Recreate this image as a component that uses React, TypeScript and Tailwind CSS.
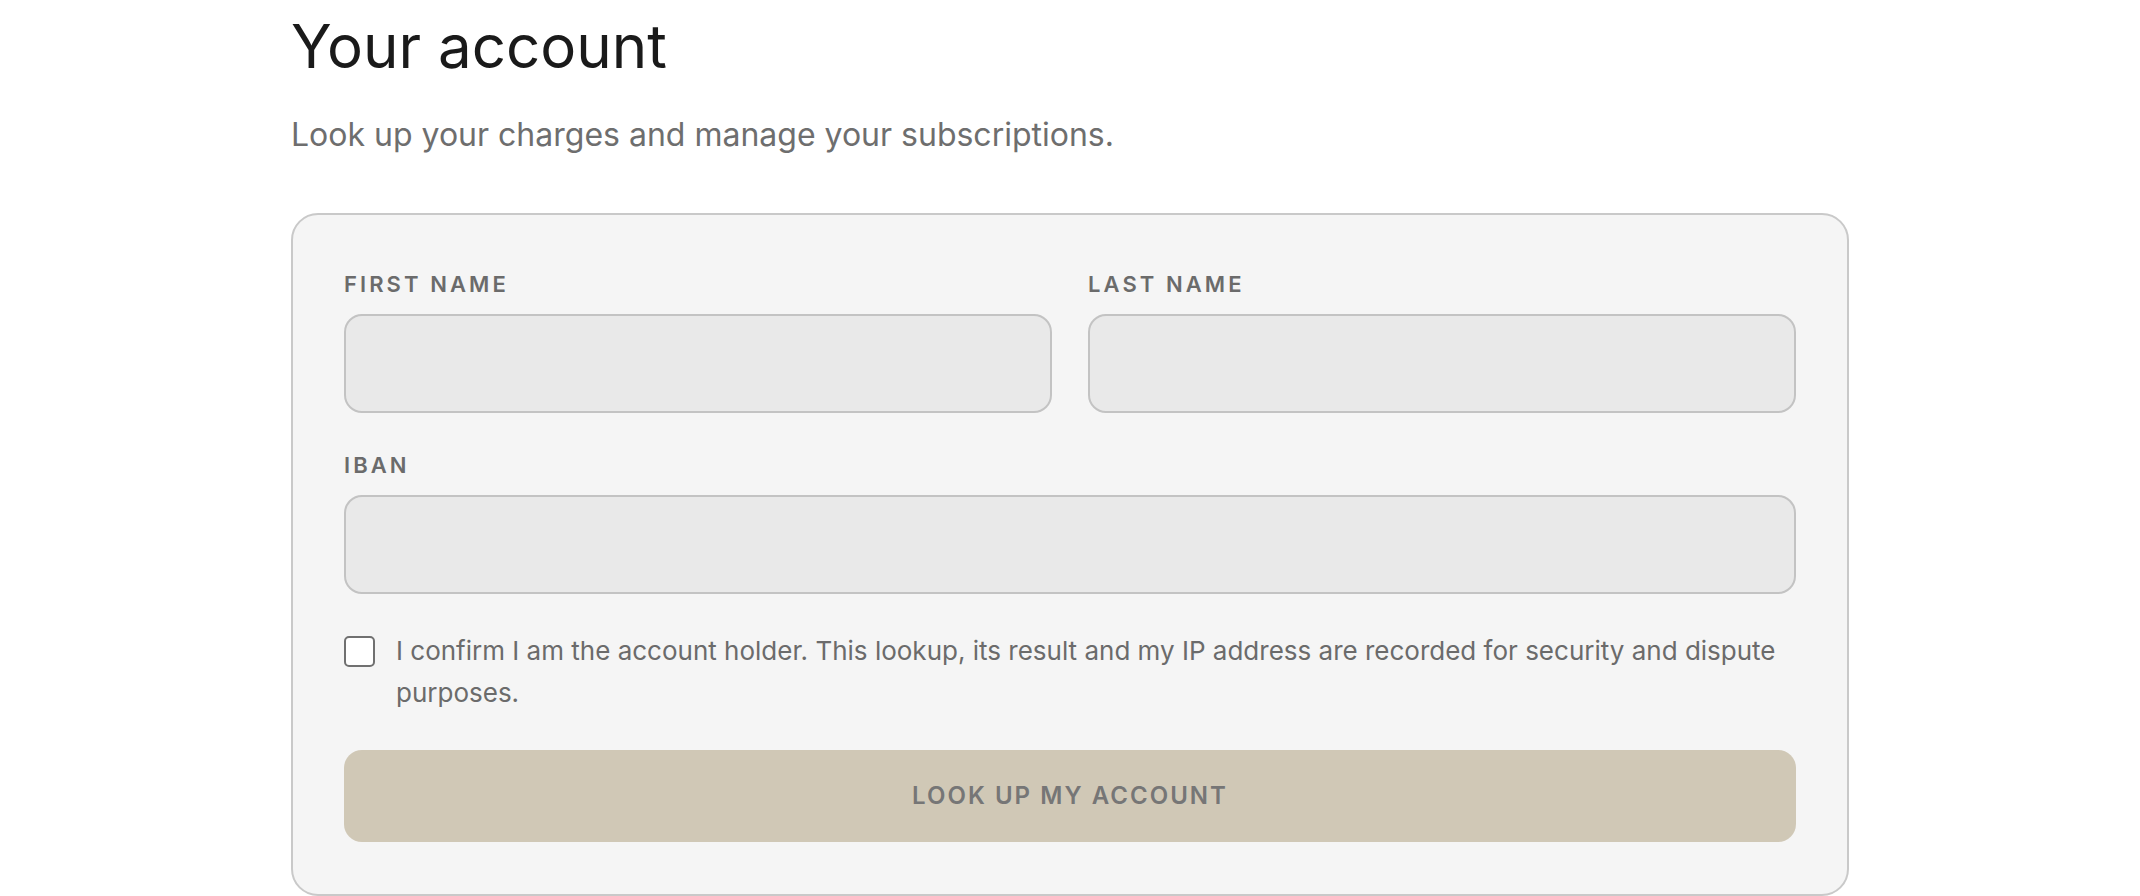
import React, { useState } from 'react';

const font = { fontFamily: 'Inter, "Noto Sans", sans-serif' };

const Field: React.FC<{ label: string; name: string }> = ({ label, name }) => (
  <div className="flex flex-col">
    <label
      htmlFor={name}
      className="mb-[13px] text-[22px] leading-[33px] font-semibold uppercase tracking-[0.14em] text-[#6b6b6b]"
    >
      {label}
    </label>
    <input
      id={name}
      name={name}
      className="h-[99px] w-full rounded-[18px] border-2 border-[#c3c3c3] bg-[#e9e9e9] px-6 text-[24px] text-[#333] outline-none"
    />
  </div>
);

const App: React.FC = () => {
  const [confirmed, setConfirmed] = useState(false);

  return (
    <div className="min-h-screen bg-white" style={font}>
      <div className="ml-[291px] w-[1558px] pt-[16px]">
        <h1 className="text-[60px] leading-[60px] font-normal text-[#1a1a1a]">Your account</h1>
        <p className="mt-9 text-[32px] leading-[45px] text-[#6e6e6e]">
          Look up your charges and manage your subscriptions.
        </p>

        <form
          className="mt-[56px] flex flex-col gap-9 rounded-[27px] border-2 border-[#c9c9c9] bg-[#f5f5f5] px-[51px] pt-[53px] pb-[52px]"
          onSubmit={e => e.preventDefault()}
        >
          <div className="grid grid-cols-2 gap-9">
            <Field label="First name" name="firstName" />
            <Field label="Last name" name="lastName" />
          </div>

          <Field label="IBAN" name="iban" />

          <label className="flex items-start gap-[21px] cursor-pointer">
            <input
              type="checkbox"
              checked={confirmed}
              onChange={e => setConfirmed(e.target.checked)}
              className="mt-[6px] h-[31px] w-[31px] shrink-0 appearance-none rounded-[5px] border-2 border-[#707070] bg-white"
            />
            <span className="text-[26px] leading-[42px] text-[#6b6b6b]">
              I confirm I am the account holder. This lookup, its result and my IP address are recorded for security and dispute purposes.
            </span>
          </label>

          <button
            type="submit"
            className="h-[92px] w-full rounded-[18px] bg-[#d0c8b6] text-[24px] font-semibold uppercase tracking-[0.085em] text-[#767676]"
          >
            Look up my account
          </button>
        </form>
      </div>
    </div>
  );
};

export default App;
